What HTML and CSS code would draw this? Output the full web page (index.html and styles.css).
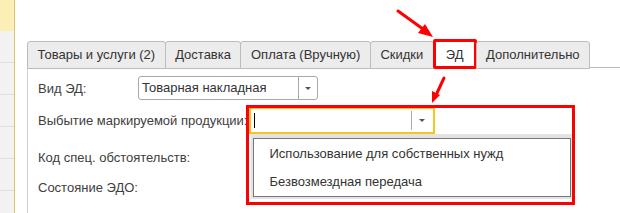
FILE: index.html
```html
<!DOCTYPE html>
<html lang="ru">
<head>
  <meta charset="UTF-8">
  <title>ЭД</title>
  <link rel="stylesheet" href="styles.css">
</head>
<body>
  <div class="page">
    <div class="sidebar">
      <div class="sidebar-head"></div>
      <div class="sidebar-row"></div>
      <div class="sidebar-row"></div>
      <div class="sidebar-row"></div>
      <div class="sidebar-row"></div>
      <div class="sidebar-row"></div>
    </div>

    <div class="main">
      <div class="tabs">
        <div class="tab">Товары и услуги (2)</div>
        <div class="tab">Доставка</div>
        <div class="tab">Оплата (Вручную)</div>
        <div class="tab">Скидки</div>
        <div class="tab tab-active">ЭД</div>
        <div class="tab">Дополнительно</div>
        <div class="tabs-rest"></div>
      </div>

      <div class="panel">
        <div class="form-row row-kind">
          <span class="label">Вид ЭД:</span>
          <div class="select">
            <div class="select-text">Товарная накладная</div>
            <div class="select-btn"><span class="caret"></span></div>
          </div>
        </div>

        <div class="form-row row-marking">
          <span class="label">Выбытие маркируемой продукции:</span>
          <div class="combo">
            <div class="combo-input">
              <div class="combo-text"><span class="cursor"></span></div>
              <div class="combo-btn"><span class="caret"></span></div>
            </div>
            <div class="dropdown">
              <div class="dropdown-box">
                <div class="dropdown-item">Использование для собственных нужд</div>
                <div class="dropdown-item">Безвозмездная передача</div>
              </div>
            </div>
            <div class="mark mark-list"></div>
          </div>
        </div>

        <div class="form-row row-plain">
          <span class="label">Код спец. обстоятельств:</span>
        </div>

        <div class="form-row row-plain row-last">
          <span class="label">Состояние ЭДО:</span>
        </div>
      </div>
    </div>

    <svg class="arrows" width="620" height="213" viewBox="0 0 620 213">
      <line x1="398" y1="11" x2="423" y2="29" stroke="#f00" stroke-width="3" stroke-linecap="round"/>
      <polygon points="433,37 418,33 425,24" fill="#f00"/>
      <line x1="444" y1="78" x2="437" y2="93" stroke="#f00" stroke-width="3" stroke-linecap="round"/>
      <polygon points="432,103 432,91 440,95" fill="#f00"/>
    </svg>
  </div>
</body>
</html>
```

FILE: styles.css
```css
body {
  margin: 0;
  padding: 0;
  font-family: "Liberation Sans", Arial, sans-serif;
  font-size: 13px;
  color: #404040;
  background-color: #fff;
}

.page {
  position: relative;
  display: flex;
  width: 620px;
  height: 213px;
  overflow: hidden;
}

/* left column */
.sidebar {
  width: 14px;
  flex-shrink: 0;
  border-right: 1px solid #d9c56c;
  background-color: #f2f2f2;
}

.sidebar-head {
  height: 31px;
  background-color: #fbefb6;
}

.sidebar-row {
  height: 31px;
  border-bottom: 1px solid #e0e0e0;
}

/* main area */
.main {
  flex: 1;
  padding-top: 41px;
  padding-left: 12px;
}

.tabs {
  display: flex;
  height: 27px;
}

.tab {
  position: relative;
  height: 26px;
  line-height: 26px;
  padding: 0 9.5px;
  margin-right: -1px;
  color: #333;
  background-color: #ececec;
  border: 1px solid #bcbcbc;
  border-bottom: 1px solid #bcbcbc;
  border-radius: 3px 3px 0 0;
}

.tab-active {
  background-color: #fff;
  border-bottom-color: #fff;
  padding: 0 12px;
}

.tab-active::after {
  content: "";
  position: absolute;
  top: -3px;
  left: -1px;
  right: -1px;
  bottom: -1px;
  border: 3px solid #f00;
  border-radius: 2px;
}

.tabs-rest {
  flex: 1;
  border-bottom: 1px solid #bcbcbc;
}

.panel {
  height: 145px;
  padding-top: 8px;
  padding-left: 10px;
  border-left: 1px solid #cfcfcf;
}

.form-row {
  display: flex;
  align-items: center;
}

.row-kind {
  height: 24px;
  margin-bottom: 7px;
}

.row-kind .label {
  width: 100px;
}

.row-marking {
  height: 27px;
  margin-bottom: 11px;
}

.row-plain {
  height: 24px;
  margin-bottom: 6px;
}

/* select */
.select {
  display: flex;
  width: 178px;
  height: 22px;
  border: 1px solid #a9a9a9;
  border-radius: 3px;
  background-color: #fff;
}

.select-text {
  flex: 1;
  padding-left: 3px;
  line-height: 22px;
  color: #333;
}

.select-btn {
  width: 18px;
  border-left: 1px solid #a9a9a9;
  display: flex;
  align-items: center;
  justify-content: center;
}

.caret {
  width: 0;
  height: 0;
  border-left: 3px solid transparent;
  border-right: 3px solid transparent;
  border-top: 3px solid #555;
}

/* combo with open list */
.combo {
  position: relative;
  margin-left: 1px;
}

.combo-input {
  display: flex;
  width: 182px;
  height: 23px;
  border: 2px solid #f7c51c;
  background-color: #fff;
}

.combo-text {
  flex: 1;
  display: flex;
  align-items: center;
  padding-left: 3px;
}

.cursor {
  width: 1px;
  height: 15px;
  background-color: #000;
}

.combo-btn {
  width: 21px;
  margin: 2px 0;
  border-left: 1px solid #a9a9a9;
  display: flex;
  align-items: center;
  justify-content: center;
}

.dropdown {
  position: absolute;
  top: 100%;
  left: 2px;
  width: 318px;
  padding: 4px 2px 2px 2px;
  background-color: #e3e3e3;
  z-index: 5;
}

.dropdown-box {
  padding-top: 1px;
  border: 1px solid #777;
  background-color: #fff;
}

.dropdown-item {
  height: 28px;
  line-height: 28px;
  padding-left: 16px;
  color: #333;
}

.mark-list {
  position: absolute;
  top: -2px;
  left: -3px;
  width: 323px;
  height: 94px;
  border: 3px solid #f00;
  z-index: 6;
}

.arrows {
  position: absolute;
  top: 0;
  left: 0;
  pointer-events: none;
}
```
